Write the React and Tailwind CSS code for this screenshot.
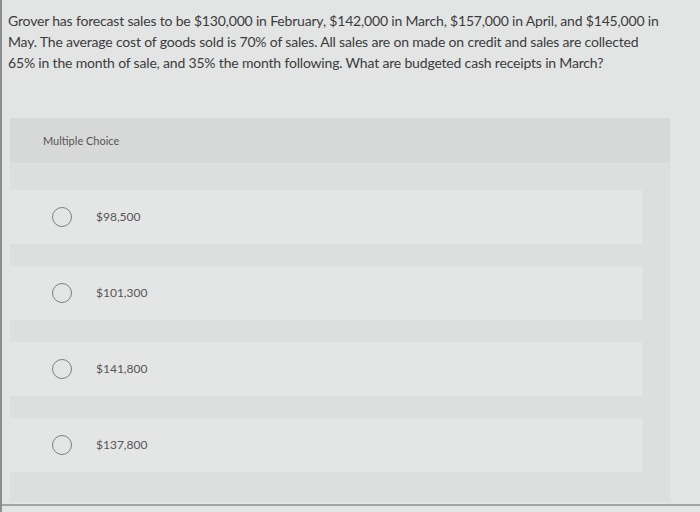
export default function App() {
  const options = ["$98,500", "$101,300", "$141,800", "$137,800"];

  return (
    <div
      className="relative w-[700px] h-[512px] overflow-hidden bg-[#e3e4e4] border-l-2 border-[#8c8d8d]"
      style={{ fontFamily: "Lato, 'Open Sans', sans-serif" }}
    >
      {/* QUESTION */}
      <p className="pl-[6px] pt-[10px] text-[14px] leading-[21px] tracking-[-0.18px] whitespace-nowrap text-[#3b3c3c]">
        Grover has forecast sales to be $130,000 in February, $142,000 in March, $157,000 in April, and $145,000 in
        <br />
        May. The average cost of goods sold is 70% of sales. All sales are on made on credit and sales are collected
        <br />
        65% in the month of sale, and 35% the month following. What are budgeted cash receipts in March?
      </p>

      {/* PANEL */}
      <div className="ml-[8px] mt-[45px] w-[660px] h-[384px] bg-[#dddede]">
        <div className="h-[45px] bg-[#d7d8d8] pl-[33px] pt-[16px] text-[11px] leading-[13px] text-[#555]">
          Multiple Choice
        </div>

        <div className="flex flex-col gap-[22px] pt-[27px]">
          {options.map((o) => (
            <div
              key={o}
              className="flex items-center h-[54px] w-[632px] bg-[#e4e5e5] pl-[42px]"
            >
              <span className="w-[20px] h-[20px] rounded-full border-[1.5px] border-[#7d7e7e]" />
              <span className="ml-[24px] text-[12px] text-[#555656]">{o}</span>
            </div>
          ))}
        </div>
      </div>

      <div className="absolute left-0 right-0 bottom-[6px] h-[2px] bg-[#a2a3a3]" />
    </div>
  );
}
